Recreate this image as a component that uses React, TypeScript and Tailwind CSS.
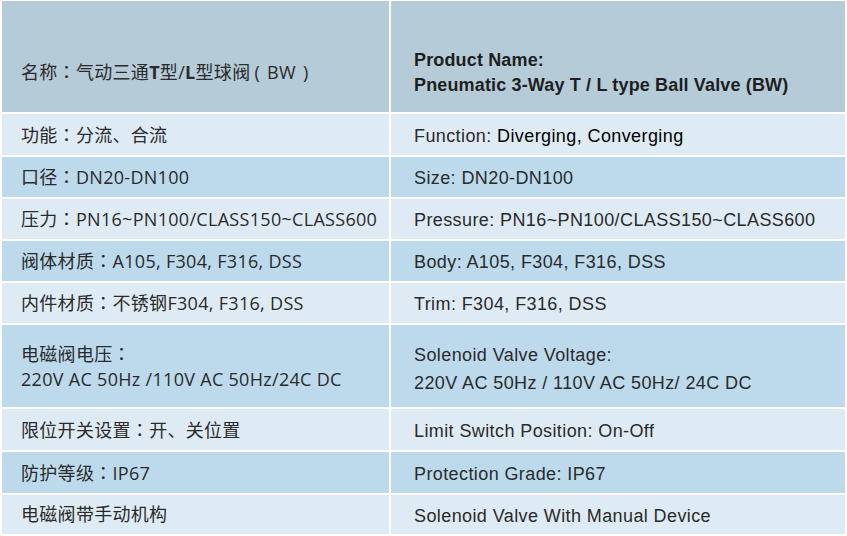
const C = () => <span className="font-['Noto_Sans_CJK_TC',sans-serif]">：</span>;

const rows: { zh: React.ReactNode; en: React.ReactNode; h: string }[] = [
  { zh: <>功能<C />分流、合流</>, en: <>Function: <span className="text-black">Diverging, Converging</span></>, h: 'h-[41px]' },
  { zh: <>口径<C />DN20-DN100</>, en: 'Size: DN20-DN100', h: 'h-[40px]' },
  { zh: <>压力<C />PN16~PN100/CLASS150~CLASS600</>, en: 'Pressure: PN16~PN100/CLASS150~CLASS600', h: 'h-[40px]' },
  { zh: <>阀体材质<C />A105, F304, F316, DSS</>, en: 'Body: A105, F304, F316, DSS', h: 'h-[40px]' },
  { zh: <>内件材质<C />不锈钢F304, F316, DSS</>, en: 'Trim: F304, F316, DSS', h: 'h-[40px]' },
  {
    zh: <>电磁阀电压<C /><br />220V AC 50Hz /110V AC 50Hz/24C DC</>,
    en: <span className="leading-[28px] block pt-[4px]">Solenoid Valve Voltage:<br />220V AC 50Hz / 110V AC 50Hz/ 24C DC</span>,
    h: 'h-[82px]',
  },
  { zh: <>限位开关设置<C />开、关位置</>, en: 'Limit Switch Position: On-Off', h: 'h-[41px]' },
  { zh: <>防护等级<C />IP67</>, en: 'Protection Grade: IP67', h: 'h-[41px]' },
  { zh: '电磁阀带手动机构', en: 'Solenoid Valve With Manual Device', h: 'h-[39px]' },
];

const zhFont = "font-['Open_Sans','Noto_Sans_CJK_SC',sans-serif]";
const enFont = "font-['Liberation_Sans',Arial,sans-serif]";

export default function App() {
  return (
    <div className="w-[847px] h-[536px] bg-white pl-[2px] pt-[1px] overflow-hidden">
      <div className="grid w-[843px] grid-cols-[387px_454px] gap-[2px] text-[#2a2a2a]">
        {/* header */}
        <div className={`h-[111px] bg-[#b5cbd8] flex items-end pb-[26px] pl-[19px] text-[18px] tracking-[0.3px] ${zhFont}`}>
          <span>
            名称<C />气动三通<b>T</b>型/<b>L</b>型球阀
            <span className="ml-[4px]">(</span>
            <span className="mx-[7px]">BW</span>)
          </span>
        </div>
        <div className={`h-[111px] bg-[#b5cbd8] flex items-end pb-[14px] pl-[23px] text-[18px] font-bold tracking-[0.15px] leading-[25px] text-[#1e1e1e] ${enFont}`}>
          <span>
            Product Name:
            <br />
            Pneumatic 3-Way T / L type Ball Valve (BW)
          </span>
        </div>

        {rows.map((r, i) => {
          const bg = i % 2 === 0 ? 'bg-[#dfebf4]' : 'bg-[#bddaed]';
          return (
            <>
              <div key={`z${i}`} className={`${r.h} ${bg} flex items-center pl-[19px] text-[18px] tracking-[0.3px] leading-[25px] ${zhFont}`}>
                <span>{r.zh}</span>
              </div>
              <div key={`e${i}`} className={`${r.h} ${bg} flex items-center pl-[23px] pt-[2px] text-[18px] tracking-[0.4px] leading-[24px] ${enFont}`}>
                <span>{r.en}</span>
              </div>
            </>
          );
        })}
      </div>
    </div>
  );
}
